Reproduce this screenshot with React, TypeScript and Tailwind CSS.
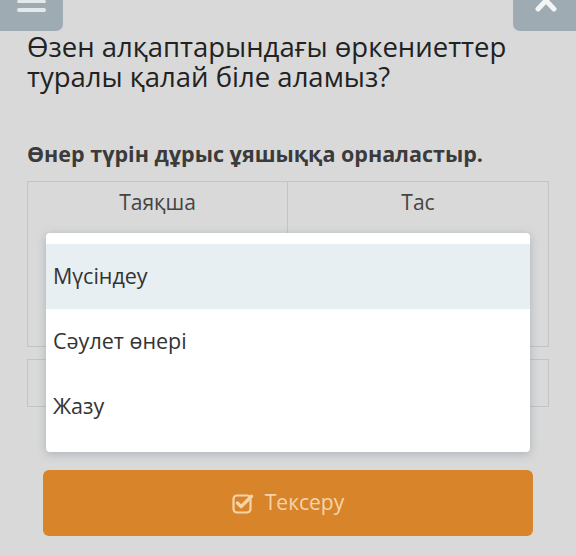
import { useState } from 'react';

const OPTIONS = ['Мүсіндеу', 'Сәулет өнері', 'Жазу'];

function CheckSquare() {
  return (
    <svg width="22" height="22" viewBox="0 0 22 22" fill="none" className="shrink-0">
      <rect x="1.5" y="3.5" width="17" height="17" rx="3.5" stroke="currentColor" strokeWidth="2.2" />
      <path d="M5.5 11l3.6 3.6L19.5 4.2" stroke="currentColor" strokeWidth="3.4" strokeLinecap="round" strokeLinejoin="round" />
    </svg>
  );
}

export default function App() {
  const [active] = useState(0);

  return (
    <div className="relative w-[576px] h-[556px] overflow-hidden bg-[#d9d9d9] font-['Open_Sans',sans-serif]">
      {/* top bar, scrolled partly out of view */}
      <div className="flex justify-between h-[31px]">
        <div className="w-[63px] h-[31px] bg-[#9eabb3] rounded-br-[7px] flex flex-col gap-[5px] items-center">
          <span className="block w-[29px] h-[3px] bg-[#e3e8eb] rounded-full" />
          <span className="block w-[29px] h-[4px] bg-[#e3e8eb] rounded-full" />
        </div>
        <div className="w-[63px] h-[31px] bg-[#9eabb3] rounded-bl-[7px] flex justify-center">
          <svg width="26" height="16" viewBox="0 0 26 16" className="-mt-[2px] ml-[4px]">
            <path d="M4 -6L20 11M20 -6L4 11" stroke="#f2f4f5" strokeWidth="5" strokeLinecap="round" />
          </svg>
        </div>
      </div>

      <h1 className="px-[27px] mt-[1px] text-[27.5px] leading-[30px] font-normal text-[#222]">
        Өзен алқаптарындағы өркениеттер туралы қалай біле аламыз?
      </h1>

      <p className="px-[27px] mt-[48px] text-[21.5px] leading-[28px] font-bold text-[#3b3b3b]">
        Өнер түрін дұрыс ұяшыққа орналастыр.
      </p>

      <div className="mx-[27px] mt-[13px] border border-[#c4c4c4]">
        <div className="grid grid-cols-2 h-[49px]">
          <div className="border-r border-[#c4c4c4] text-center pt-[6px] text-[21px] leading-[28px] text-[#444]">Таяқша</div>
          <div className="text-center pt-[6px] text-[21px] leading-[28px] text-[#444]">Тас</div>
        </div>
        <div className="grid grid-cols-2 h-[115px]">
          <div className="border-r border-[#c4c4c4]" />
          <div />
        </div>
      </div>

      <div className="mx-[27px] mt-[12px] h-[48px] border border-[#c4c4c4]" />

      <button className="mx-[43px] mt-[63px] w-[490px] h-[66px] rounded-[6px] bg-[#d8842a] flex items-center justify-center gap-[11px] text-[#f5d4a8] text-[21px]">
        <CheckSquare />
        <span>Тексеру</span>
      </button>

      {/* open dropdown */}
      <ul className="absolute left-[46px] top-[233px] w-[484px] h-[219px] bg-white rounded-[4px] py-[11px] shadow-[0_2px_10px_rgba(90,110,120,0.35)]">
        {OPTIONS.map((o, i) => (
          <li
            key={o}
            className={`h-[65px] flex items-center px-[7px] text-[21.5px] text-[#333] ${i === active ? 'bg-[#e8eff2]' : ''}`}
          >
            {o}
          </li>
        ))}
      </ul>
    </div>
  );
}
